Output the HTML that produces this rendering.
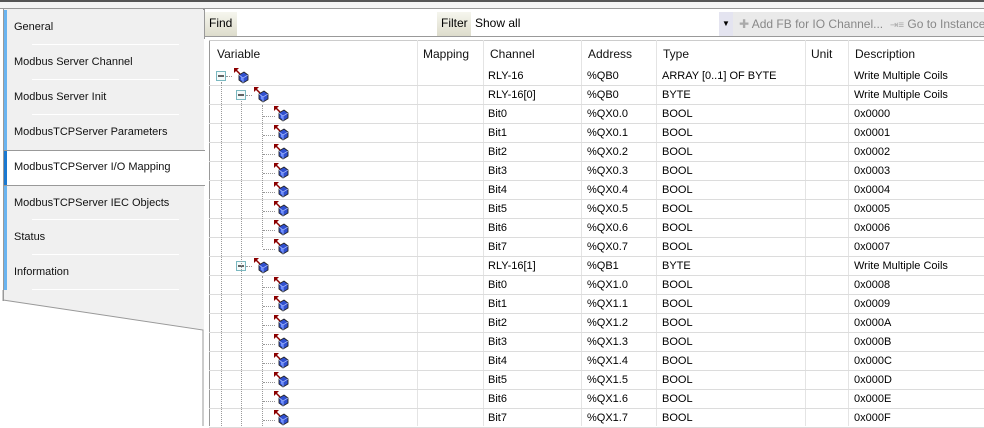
<!DOCTYPE html>
<html><head><style>
*{margin:0;padding:0;box-sizing:border-box}
body{width:984px;height:426px;overflow:hidden;background:#fff;font-family:"Liberation Sans","DejaVu Sans",sans-serif;font-size:11px;color:#000;position:relative}
.abs{position:absolute}
.tab{position:absolute;left:3px;width:201px;height:35px;background:#f0f0f0;border-left:4px solid #6ab4f0;padding-left:7px;line-height:35px;font-size:11px;color:#111}
.tab .sep{position:absolute;left:25px;right:25px;bottom:0;height:1px;background:#fff}
.row{position:absolute;left:209px;width:775px;height:19px;border-bottom:1px solid #dcdcdc}
.c{position:absolute;top:0;line-height:18px;white-space:nowrap}
.vl{position:absolute;top:40px;bottom:0;width:1px;background:#e4e4e4}
.hdr{position:absolute;top:47px;font-size:12px;color:#111}
.dot{position:absolute;border-left:1px dotted #999}
.doth{position:absolute;border-top:1px dotted #999}
</style></head><body>
<div class="abs" style="left:0;top:0;width:984px;height:2px;background:#555"></div>
<div class="abs" style="left:0;top:2px;width:984px;height:6px;background:#f4f4f4"></div>
<div class="abs" style="left:0;top:8px;width:984px;height:1px;background:#999"></div>
<div class="abs" style="left:3px;top:9px;width:201px;height:290px;background:#f0f0f0;border-right:1px solid #999"></div>
<div class="tab" style="top:10px">General<div class="sep"></div></div>
<div class="tab" style="top:45px">Modbus Server Channel<div class="sep"></div></div>
<div class="tab" style="top:80px">Modbus Server Init<div class="sep"></div></div>
<div class="tab" style="top:115px;height:35px">ModbusTCPServer Parameters</div>
<div class="abs" style="left:3px;top:150px;width:202px;height:1px;background:#999"></div>
<div class="tab" style="top:151px;height:34px;background:#fff;border-left-color:#1a78d0;line-height:32px">ModbusTCPServer I/O Mapping</div>
<div class="abs" style="left:3px;top:185px;width:202px;height:1px;background:#999"></div>
<div class="tab" style="top:186px;height:34px">ModbusTCPServer IEC Objects<div class="sep"></div></div>
<div class="tab" style="top:220px">Status<div class="sep"></div></div>
<div class="tab" style="top:255px">Information<div class="sep"></div></div>
<svg class="abs" style="left:0;top:290px" width="210" height="136"><polygon points="3,0 204,0 204,40 3,10" fill="#f0f0f0"/><polyline points="3,10 203,40 203,136" fill="none" stroke="#999"/><line x1="3" y1="0" x2="3" y2="11" stroke="#999"/></svg>
<div class="abs" style="left:3px;top:9px;width:1px;height:292px;background:#999"></div>
<div class="abs" style="left:204px;top:9px;width:780px;height:30px;border-left:1px solid #999"></div>
<div class="abs" style="left:205px;top:12px;width:32px;height:24px;background:linear-gradient(#f6f6ee,#dddccc);font-size:12px;padding:4px 0 0 4px">Find</div>
<div class="abs" style="left:437px;top:12px;width:34px;height:24px;background:linear-gradient(#f6f6ee,#dddccc);font-size:12px;padding:4px 0 0 4px">Filter</div>
<div class="abs" style="left:475px;top:16px;font-size:12px">Show all</div>
<div class="abs" style="left:719px;top:12px;width:14px;height:24px;background:#e4e4f0;font-size:8px;text-align:center;line-height:24px">▼</div>
<div class="abs" style="left:733px;top:12px;width:251px;height:24px;background:#eaeaea;color:#888;font-size:12px;line-height:24px;padding-left:6px;white-space:nowrap"><span style="color:#aaa">✚</span> Add FB for IO Channel... &nbsp;<span style="color:#aaa;font-size:10px">⇥≡</span> Go to Instance</div>
<div class="abs" style="left:205px;top:36px;width:779px;height:1px;background:#999"></div>
<div class="abs" style="left:209px;top:40px;width:1px;height:386px;background:#999"></div>
<div class="abs" style="left:209px;top:40px;width:775px;height:1px;background:#ccc"></div>
<div class="vl" style="left:417px"></div><div class="vl" style="left:483px"></div><div class="vl" style="left:581px"></div><div class="vl" style="left:656px"></div><div class="vl" style="left:805px"></div><div class="vl" style="left:848px"></div>
<div class="hdr" style="left:217px">Variable</div>
<div class="hdr" style="left:423px">Mapping</div>
<div class="hdr" style="left:490px">Channel</div>
<div class="hdr" style="left:588px">Address</div>
<div class="hdr" style="left:663px">Type</div>
<div class="hdr" style="left:811px">Unit</div>
<div class="hdr" style="left:855px">Description</div>
<div id="rows"></div>
<svg width="0" height="0" style="position:absolute"><defs><g id="ic"><path d="M0,0 L5,0 L0,5 Z" fill="#8b0000"/><line x1="1" y1="1" x2="6" y2="6" stroke="#8b0000" stroke-width="1.5"/><path d="M5,7 L10,4 L14,7 L14,12 L9,15 L5,12 Z" fill="#3050d0" stroke="#222" stroke-width="0.9"/><path d="M5,7 L9,10 L14,7 M9,10 L9,15" stroke="#c0d0ff" stroke-width="0.7" fill="none"/><path d="M7,9 L9,10 L9,13 L7,12Z" fill="#7090ff"/></g>
<g id="mn"><rect x="0.5" y="0.5" width="9" height="9" fill="#f4fafa" stroke="#7ab8c0"/><line x1="2" y1="5" x2="8" y2="5" stroke="#222" stroke-width="1.4"/></g></defs></svg>
<script>
var R=[];
function add(l,ch,ad,ty,de){R.push([l,ch,ad,ty,de]);}
add(0,"RLY-16","%QB0","ARRAY [0..1] OF BYTE","Write Multiple Coils");
add(1,"RLY-16[0]","%QB0","BYTE","Write Multiple Coils");
for(var i=0;i<8;i++)add(2,"Bit"+i,"%QX0."+i,"BOOL","0x000"+i);
add(1,"RLY-16[1]","%QB1","BYTE","Write Multiple Coils");
var hx="89ABCDEF";
for(var i=0;i<8;i++)add(2,"Bit"+i,"%QX1."+i,"BOOL","0x000"+hx[i]);
var h="";
R.forEach(function(r,k){
 var y=67+k*19;
 h+='<div class="row" style="top:'+y+'px"></div>';
 var cx={0:216,1:236}[r[0]],ix=[234,254,274][r[0]];
 if(r[0]<2)h+='<svg class="abs" style="left:'+cx+'px;top:'+(y+4)+'px" width="10" height="10"><use href="#mn"/></svg><div class="doth" style="left:'+(cx+10)+'px;top:'+(y+9)+'px;width:6px"></div>';
 else h+='<div class="doth" style="left:263px;top:'+(y+11)+'px;width:12px"></div>';
 h+='<svg class="abs" style="left:'+ix+'px;top:'+(y+1)+'px" width="15" height="16"><use href="#ic"/></svg>';
 h+='<div class="c" style="left:488px;top:'+y+'px">'+r[1]+'</div><div class="c" style="left:587px;top:'+y+'px">'+r[2]+'</div><div class="c" style="left:662px;top:'+y+'px">'+r[3]+'</div><div class="c" style="left:854px;top:'+y+'px">'+r[4]+'</div>';
});
h+='<div class="dot" style="left:221px;top:82px;height:344px"></div><div class="dot" style="left:241px;top:101px;height:325px"></div><div class="dot" style="left:262px;top:105px;height:142px"></div><div class="dot" style="left:262px;top:276px;height:150px"></div>';
document.getElementById("rows").innerHTML=h;
</script>
</body></html>
